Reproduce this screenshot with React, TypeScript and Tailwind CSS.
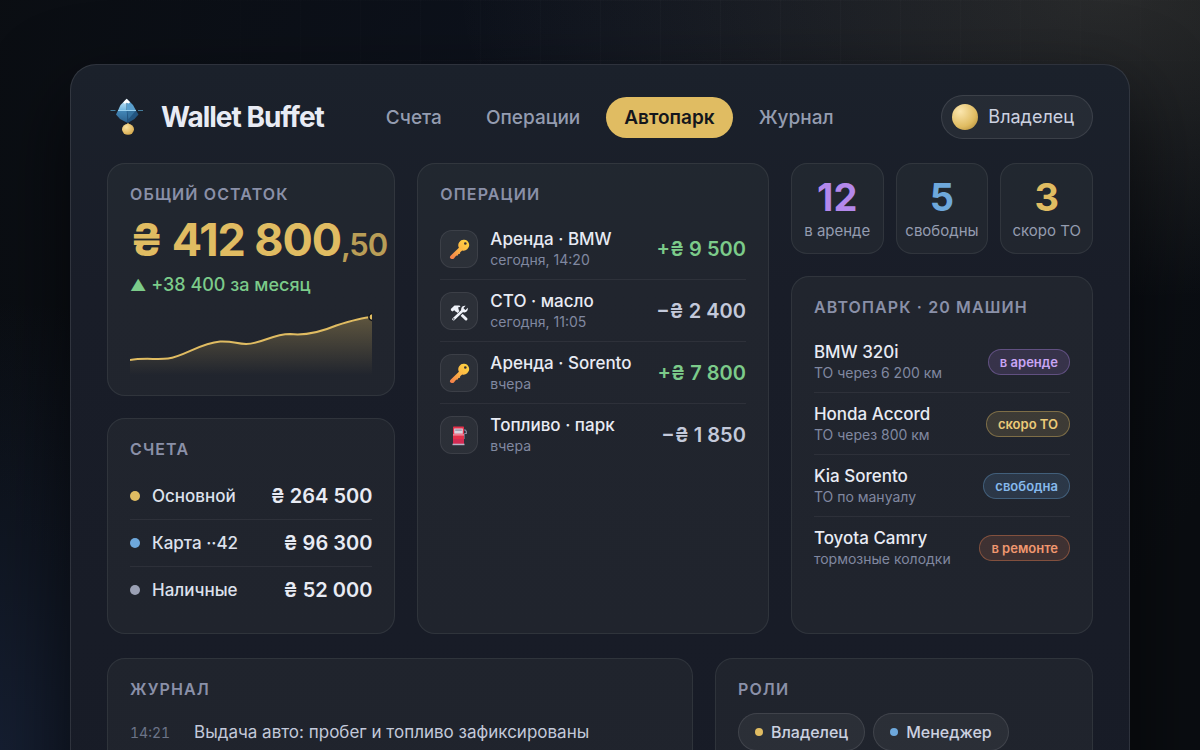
import type { ReactNode } from "react";

const NAV = ["Счета", "Операции", "Автопарк", "Журнал"];

const ACCOUNTS = [
  { name: "Основной", amount: "₴ 264 500", dot: "bg-[#e0bc62]" },
  { name: "Карта ··42", amount: "₴ 96 300", dot: "bg-[#6ea8dc]" },
  { name: "Наличные", amount: "₴ 52 000", dot: "bg-[#9aa0b4]" },
];

const OPERATIONS = [
  { icon: <KeyIcon />, title: "Аренда · BMW", when: "сегодня, 14:20", amount: "+₴ 9 500", income: true },
  { icon: <ToolsIcon />, title: "СТО · масло", when: "сегодня, 11:05", amount: "−₴ 2 400", income: false },
  { icon: <KeyIcon />, title: "Аренда · Sorento", when: "вчера", amount: "+₴ 7 800", income: true },
  { icon: <FuelIcon />, title: "Топливо · парк", when: "вчера", amount: "−₴ 1 850", income: false },
];

const STATS = [
  { value: 12, label: "в аренде", color: "text-[#b388eb]" },
  { value: 5, label: "свободны", color: "text-[#6ea8dc]" },
  { value: 3, label: "скоро ТО", color: "text-[#e0bc62]" },
];

const CARS = [
  { name: "BMW 320i", note: "ТО через 6 200 км", status: "в аренде", badge: "text-[#c9a5f5] bg-[#b388eb]/15 border-[#b388eb]/35" },
  { name: "Honda Accord", note: "ТО через 800 км", status: "скоро ТО", badge: "text-[#ecca78] bg-[#e0bc62]/15 border-[#e0bc62]/40" },
  { name: "Kia Sorento", note: "ТО по мануалу", status: "свободна", badge: "text-[#86b9ec] bg-[#6ea8dc]/15 border-[#6ea8dc]/35" },
  { name: "Toyota Camry", note: "тормозные колодки", status: "в ремонте", badge: "text-[#f0976f] bg-[#e8804f]/15 border-[#e8804f]/40" },
];

const JOURNAL = [
  { time: "14:21", text: "Выдача авто: пробег и топливо зафиксированы" },
];

const ROLES = [
  { name: "Владелец", dot: "bg-[#e0bc62]" },
  { name: "Менеджер", dot: "bg-[#6ea8dc]" },
];

function KeyIcon() {
  return (
    <svg width="22" height="22" viewBox="0 0 22 22" aria-hidden="true">
      <defs>
        <linearGradient id="key" x1="1" y1="0" x2="0" y2="1">
          <stop offset="0" stopColor="#ffd83f" />
          <stop offset="0.5" stopColor="#fcb546" />
          <stop offset="1" stopColor="#f2784a" />
        </linearGradient>
      </defs>
      <path
        d="M16.200 1.800a5.300 5.300 0 0 1 3 9.400 5.300 5.300 0 0 1-5 1.300l-2 1.700-.2 1.500-1.600.2-.6 1.700-1.700.1-2.200 2.700c-1 1.200-3.800.6-4-.9-.1-.8.200-1.300.7-1.800l8.300-8a5.400 5.400 0 0 1 5.300-7.900z"
        fill="url(#key)"
      />
      <circle cx="17.300" cy="5.500" r="1.300" fill="#3a3034" />
    </svg>
  );
}

function ToolsIcon() {
  return (
    <svg width="22" height="22" viewBox="0 0 22 22" fill="none" aria-hidden="true">
      {/* hammer */}
      <path d="M8.500 10 18 19" stroke="#eef1f8" strokeWidth="3" strokeLinecap="round" />
      <path d="M3 10.500 2.800 9 6.500 5.600h5l1 1.200-2.500.6.800 2-2.600 2.600-2-1.800-1.600 1.400z" fill="#eef1f8" />
      {/* wrench */}
      <path d="M6 19.500 15.500 10" stroke="#22272f" strokeWidth="4" />
      <path d="M5.500 19.200 15.500 9.800" stroke="#eef1f8" strokeWidth="2.600" strokeLinecap="round" />
      <path d="M17.600 5.800 15.500 8l.4 1.600 1.700.3 2.100-2.100c.6 2.500-1.200 4.800-3.600 4.600-2.200-.2-3.500-2.300-2.700-4.400.7-1.700 2.400-2.600 4.200-2.200z" fill="#eef1f8" />
      <circle cx="5.800" cy="19" r="0.700" fill="#22272f" />
    </svg>
  );
}

function FuelIcon() {
  return (
    <svg width="22" height="22" viewBox="0 0 22 22" fill="none" aria-hidden="true">
      <path d="M15.500 6h1.800l1 1.500v2h-2M16 10v5" stroke="#8b8ea3" strokeWidth="1.200" />
      <path d="M5 3.500c0-.6.400-1 1-1h9c.6 0 1 .4 1 1V20H5z" fill="#e5304a" />
      <path d="M5 15h11v5H5z" fill="#c8285a" fillOpacity="0.6" />
      <path d="M6.200 4.500h8.600v5.200H6.200z" fill="#d9d3de" />
      <path d="M7.200 5.500h6.600v1.200H7.200z" fill="#8d889c" />
      <path d="M5 10.900h11" stroke="#f3b2bd" />
      <path d="M4.500 19.700h12v1.500h-12z" fill="#b9b4c6" />
    </svg>
  );
}

function Logo() {
  return (
    <svg width="40" height="40" viewBox="0 0 40 40" aria-hidden="true">
      <defs>
        <linearGradient id="ice" x1="0" y1="0" x2="0" y2="1">
          <stop offset="0" stopColor="#d6eefb" />
          <stop offset="1" stopColor="#6fb6e0" />
        </linearGradient>
        <linearGradient id="deep" x1="0" y1="0" x2="0" y2="1">
          <stop offset="0" stopColor="#4488b8" />
          <stop offset="1" stopColor="#2a5f8c" />
        </linearGradient>
        <radialGradient id="coin" cx="0.35" cy="0.3" r="0.8">
          <stop offset="0" stopColor="#fbe3a0" />
          <stop offset="1" stopColor="#d3a547" />
        </radialGradient>
      </defs>
      <path d="M3.500 13.500h5M31 13.500h5" stroke="#4f93b8" strokeOpacity="0.8" />
      <path d="M19.700 1.700 13.500 8 11 13.500h8.700z" fill="url(#ice)" />
      <path d="M19.700 1.700 26 8l3 5.500h-9.300z" fill="#5a9fcd" />
      <path d="M11 13.500 9 17.500l4 4.500 7.700 4V13.500z" fill="url(#deep)" />
      <path d="M29 13.500l2.500 4-4 4.500-6.800 4-1-12.500z" fill="#235580" />
      <path d="m20.200 14 8.300 0-7 8z" fill="#35729f" />
      <path d="m19.700 1.700 3.500 3.500-1.700 1.300-1.800-.8-2 1.100-1.500-1.300z" fill="#fff" />
      <path d="M11 13.500h18" stroke="#9ad0ee" />
      <path d="M21 26v2" stroke="#8f7a4a" strokeWidth="2" />
      <ellipse cx="21" cy="32.300" rx="6" ry="5.500" fill="url(#coin)" />
    </svg>
  );
}

function Sparkline() {
  return (
    <svg viewBox="0 0 242 65" className="mt-[13px] block h-[65px] w-full" preserveAspectRatio="none" aria-hidden="true">
      <defs>
        <linearGradient id="area" x1="0" y1="0" x2="0" y2="1">
          <stop offset="0" stopColor="#e0bc62" stopOpacity="0.32" />
          <stop offset="1" stopColor="#e0bc62" stopOpacity="0" />
        </linearGradient>
      </defs>
      <path
        d="M0 50C14 47.500 28 50 38 48.500C54 46.500 70 33 90 31.500C104 31 106 34 116 34C132 33.500 142 24 160 24C172 25.500 188 23 206 15.500C220 11 232 7.500 242 7V65H0z"
        fill="url(#area)"
      />
      <path
        d="M0 50C14 47.500 28 50 38 48.500C54 46.500 70 33 90 31.500C104 31 106 34 116 34C132 33.500 142 24 160 24C172 25.500 188 23 206 15.500C220 11 232 7.500 242 7"
        fill="none"
        stroke="#e0bc62"
        strokeWidth="2"
      />
      <circle cx="242" cy="7" r="3.500" fill="#e0bc62" stroke="#12151c" strokeWidth="1.500" />
    </svg>
  );
}

function Card({ title, className = "", children }: { title: string; className?: string; children: ReactNode }) {
  return (
    <section className={`rounded-[18px] border border-white/[0.07] bg-[#f0ffc0]/[0.04] px-[22px] py-5 ${className}`}>
      <h2 className="text-base leading-5 font-semibold tracking-[0.07em] text-[#8a90a8] uppercase">{title}</h2>
      {children}
    </section>
  );
}

export default function App() {
  return (
    <div className="h-screen overflow-hidden bg-[#0a0d11] bg-[radial-gradient(650px_300px_at_92%_0%,rgba(210,200,175,0.15),transparent),radial-gradient(450px_450px_at_0%_100%,rgba(60,90,160,0.22),transparent),radial-gradient(700px_700px_at_50%_20%,rgba(30,45,90,0.18),transparent),radial-gradient(600px_300px_at_60%_0%,transparent,#0a0d11),linear-gradient(to_right,rgba(255,255,255,0.02)_1px,transparent_1px),linear-gradient(to_bottom,rgba(255,255,255,0.02)_1px,transparent_1px)] bg-[size:auto,auto,auto,auto,60px_60px,60px_60px] px-[70px] pt-16 font-[Inter,sans-serif] text-[#e8ebf4]">
      <main className="min-h-[900px] rounded-[26px] border border-white/10 bg-linear-to-b from-[#1b212b] via-[#191d28] via-25% to-[#171b26] px-9 pt-[30px] shadow-[0_30px_80px_rgba(0,0,0,0.6)]">
        <header className="flex items-center">
          <Logo />
          <span className="ml-[14px] text-[28px] leading-8 font-bold tracking-[-1px]">Wallet Buffet</span>
          <nav className="ml-11 flex gap-2">
            {NAV.map((item) => (
              <a
                key={item}
                href="#"
                className={`rounded-full px-[18px] py-2 text-[19px] leading-[25px] ${
                  item === "Автопарк" ? "bg-[#e0bc62] font-semibold text-[#14161c]" : "font-medium text-[#949cb0]"
                }`}
              >
                {item}
              </a>
            ))}
          </nav>
          <button className="ml-auto flex items-center gap-[10px] rounded-full border border-white/10 bg-white/5 py-2 pr-[18px] pl-[10px] text-lg leading-[26px] text-[#ccd1e0]">
            <span className="size-[26px] rounded-full bg-[radial-gradient(circle_at_32%_28%,#fbe6ae,#e0bc62_60%,#a8812f)]" />
            Владелец
          </button>
        </header>

        <div className="mt-6 grid grid-cols-[minmax(0,1.05fr)_minmax(0,1.28fr)_minmax(0,1.1fr)] gap-[22px]">
          <div className="flex flex-col gap-[22px]">
            <Card title="Общий остаток">
              <div className="mt-3 text-[45px] leading-[48px] font-bold tracking-tight whitespace-nowrap text-[#e0bc62]">
                ₴ 412 800<span className="text-[31px] font-semibold opacity-80">,50</span>
              </div>
              <div className="mt-1 text-lg leading-6 font-medium text-[#7ccb8a]">
                <span className="text-base">▲</span> +38 400 за месяц
              </div>
              <Sparkline />
            </Card>

            <Card title="Счета">
              <ul className="mt-[14px] divide-y divide-white/[0.06]">
                {ACCOUNTS.map((a) => (
                  <li key={a.name} className="flex items-center gap-3 py-[11px] leading-6">
                    <span className={`size-[10px] rounded-full ${a.dot}`} />
                    <span className="text-[17px] font-medium text-[#dde1ec]">{a.name}</span>
                    <span className="ml-auto text-xl leading-6 font-semibold">{a.amount}</span>
                  </li>
                ))}
              </ul>
            </Card>
          </div>

          <Card title="Операции">
            <ul className="mt-[14px] divide-y divide-white/[0.06]">
              {OPERATIONS.map((op) => (
                <li key={op.title} className="flex items-center gap-3 py-[10px]">
                  <span className="flex size-[38px] items-center justify-center rounded-xl border border-white/[0.08] bg-white/5">
                    {op.icon}
                  </span>
                  <div>
                    <div className="text-[17px] leading-[22px] font-medium">{op.title}</div>
                    <div className="text-sm leading-[19px] text-[#8088a0]">{op.when}</div>
                  </div>
                  <span className={`ml-auto text-xl font-semibold ${op.income ? "text-[#7ccb8a]" : "text-[#c3c9da]"}`}>
                    {op.amount}
                  </span>
                </li>
              ))}
            </ul>
          </Card>

          <div className="flex flex-col gap-[22px]">
            <div className="grid grid-cols-3 gap-3">
              {STATS.map((s) => (
                <div key={s.label} className="rounded-2xl border border-white/[0.07] bg-[#f0ffc0]/[0.04] pt-[11px] pb-[11px] text-center">
                  <div className={`text-[38px] leading-[44px] font-bold ${s.color}`}>{s.value}</div>
                  <div className="text-[15px] leading-[23px] whitespace-nowrap text-[#949cb0]">{s.label}</div>
                </div>
              ))}
            </div>

            <Card title="Автопарк · 20 машин" className="flex-1">
              <ul className="mt-[14px] divide-y divide-white/[0.06]">
                {CARS.map((car) => (
                  <li key={car.name} className="flex items-center justify-between py-[10px]">
                    <div>
                      <div className="text-[17px] leading-[22px] font-medium">{car.name}</div>
                      <div className="text-sm leading-[19px] text-[#8088a0]">{car.note}</div>
                    </div>
                    <span className={`rounded-full border px-[11px] py-1 text-[13px] leading-4 font-semibold ${car.badge}`}>
                      {car.status}
                    </span>
                  </li>
                ))}
              </ul>
            </Card>
          </div>
        </div>

        <div className="mt-6 grid grid-cols-[1.55fr_1fr] gap-[22px]">
          <Card title="Журнал">
            <ul className="mt-[14px]">
              {JOURNAL.map((j) => (
                <li key={j.time} className="flex items-baseline gap-6 py-[7px] leading-6">
                  <time className="text-sm leading-6 text-[#6c7488] tabular-nums">{j.time}</time>
                  <span className="text-[17px] text-[#c3c9da]">{j.text}</span>
                </li>
              ))}
            </ul>
          </Card>

          <Card title="Роли">
            <div className="mt-[14px] flex flex-wrap gap-2">
              {ROLES.map((r) => (
                <span
                  key={r.name}
                  className="flex items-center gap-2 rounded-full border border-white/10 bg-white/5 px-4 py-[6px] text-base leading-6 font-medium text-[#ccd1e0]"
                >
                  <span className={`size-2 rounded-full ${r.dot}`} />
                  {r.name}
                </span>
              ))}
            </div>
          </Card>
        </div>
      </main>
    </div>
  );
}
